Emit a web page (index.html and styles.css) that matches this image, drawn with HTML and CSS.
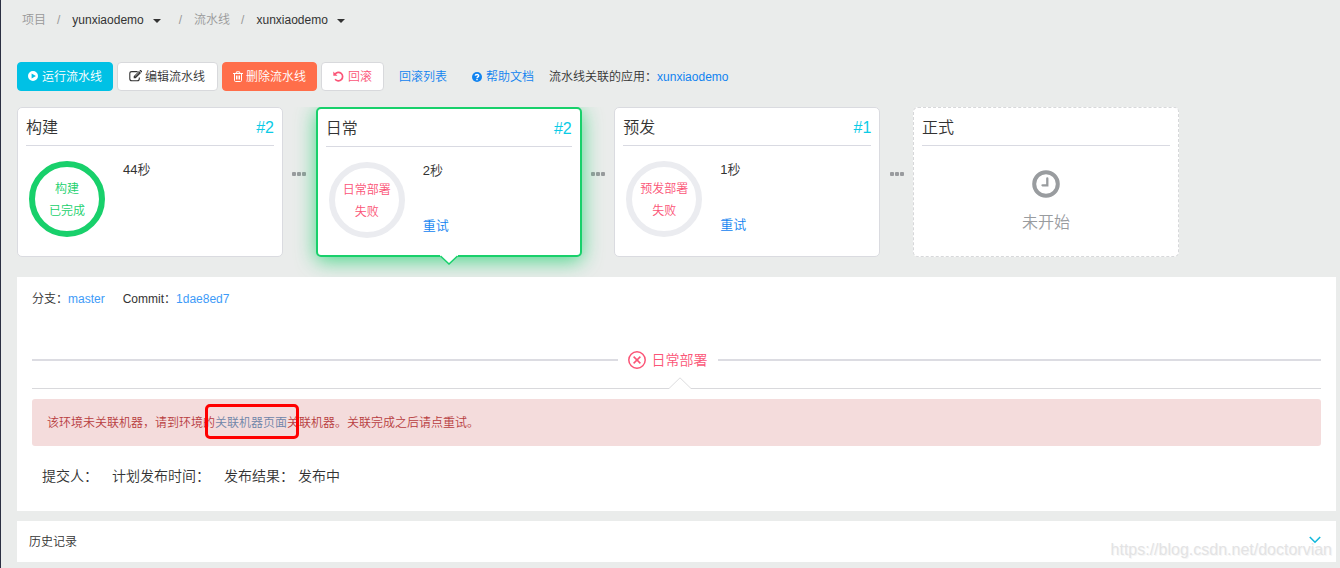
FILE: index.html
```html
<!DOCTYPE html>
<html lang="zh-CN">
<head>
<meta charset="utf-8">
<title>流水线</title>
<link rel="stylesheet" href="styles.css">
</head>
<body>
<main class="page">
  <nav class="breadcrumb" aria-label="导航">
    <span class="crumb">项目</span>
    <span class="slash">/</span>
    <button class="picker" type="button">yunxiaodemo <i class="caret"></i></button>
    <span class="slash slash-wide">/</span>
    <span class="crumb">流水线</span>
    <span class="slash">/</span>
    <button class="picker" type="button">xunxiaodemo <i class="caret"></i></button>
  </nav>

  <div class="toolbar">
    <button class="btn btn-run" type="button">
      <svg width="10" height="10" viewBox="0 0 10 10"><path fill="currentColor" fill-rule="evenodd" d="M5 0a5 5 0 1 0 0 10A5 5 0 0 0 5 0zM3.6 2.4v5.2L7.9 5z"/></svg>运行流水线</button>
    <button class="btn btn-plain btn-edit" type="button">
      <svg width="13" height="12" viewBox="0 0 13 12" fill="none" stroke="currentColor"><path stroke-width="1.1" d="M8.6 1.6H2.8C1.6 1.6.8 2.400.8 3.500v5.200c0 1.200.8 2 2 2h5.500c1.200 0 2-.8 2-2V7.500"/><path fill="currentColor" stroke="none" d="M4.700 6.300 10 1l2 2-5.300 5.300H4.700zM10.500.6l.5-.5c.3-.2.6-.2.9 0l1 1c.2.300.2.600 0 .900l-.5.500z"/><path stroke="#fff" stroke-width=".6" d="M6.200 6.200 9.900 2.500"/></svg>编辑流水线</button>
    <button class="btn btn-delete" type="button">
      <svg width="10" height="11" viewBox="0 0 10 11" fill="none" stroke="currentColor" stroke-width="1"><path d="M0 2.500h10M3 2.500l.5-1.700h3L7 2.500M1.500 2.500v7c0 .6.4 1 1 1h5c.6 0 1-.4 1-1v-7M3.500 4.500v4M5 4.500v4M6.500 4.500v4" /></svg>删除流水线</button>
    <button class="btn btn-plain btn-rollback" type="button">
      <svg width="11" height="11" viewBox="0 0 11 11"><path fill="none" stroke="currentColor" stroke-width="1.700" d="M2 3.200A4.200 4.200 0 1 1 2.100 8.200"/><path fill="currentColor" d="M.3.500v4.200h4.200z"/></svg>回滚</button>
    <a class="link rollback-list" href="#">回滚列表</a>
    <a class="link help" href="#"><svg width="10" height="10" viewBox="0 0 10 10"><circle cx="5" cy="5" r="5" fill="currentColor"/><path fill="none" stroke="#fff" stroke-width="1.400" d="M3.200 3.700C3.400 2 6.700 2 6.700 3.700 6.700 4.900 5 4.800 5 6.300"/><path fill="#fff" d="M4.300 7h1.400v1.300H4.300z"/></svg>帮助文档</a>
    <span class="related">流水线关联的应用：<a class="link" href="#">xunxiaodemo</a></span>
  </div>

  <section class="pipeline">
    <article class="stage">
      <header class="stage-head"><h2>构建</h2><a class="run-no" href="#">#2</a></header>
      <div class="stage-body">
        <div class="ring ring-done"><span>构建</span><span>已完成</span></div>
        <div class="stage-info"><span>44秒</span></div>
      </div>
    </article>
    <div class="dots"><i></i><i></i><i></i></div>
    <article class="stage stage-active">
      <header class="stage-head"><h2>日常</h2><a class="run-no" href="#">#2</a></header>
      <div class="stage-body">
        <div class="ring"><span>日常部署</span><span>失败</span></div>
        <div class="stage-info"><span>2秒</span><a class="link" href="#">重试</a></div>
      </div>
      <svg class="pointer" width="18" height="11" viewBox="0 0 18 11"><path fill="#fff" d="M0 0h18v1L9 9 0 1z"/><path fill="none" stroke="#18d06b" stroke-width="1.500" d="M.5 1 9 9l8.500-8"/></svg>
    </article>
    <div class="dots"><i></i><i></i><i></i></div>
    <article class="stage">
      <header class="stage-head"><h2>预发</h2><a class="run-no" href="#">#1</a></header>
      <div class="stage-body">
        <div class="ring"><span>预发部署</span><span>失败</span></div>
        <div class="stage-info"><span>1秒</span><a class="link" href="#">重试</a></div>
      </div>
    </article>
    <div class="dots"><i></i><i></i><i></i></div>
    <article class="stage stage-pending">
      <header class="stage-head"><h2>正式</h2></header>
      <div class="pending">
        <svg width="28" height="28" viewBox="0 0 28 28" fill="none" stroke="currentColor"><circle cx="14" cy="14" r="11.800" stroke-width="4"/><path stroke-width="2.300" stroke-linecap="round" d="M15.300 8.500v6.800H10.500"/></svg>
        <span>未开始</span>
      </div>
    </article>
  </section>

  <section class="panel detail">
    <div class="commit">
      <span>分支：<a class="link-soft" href="#">master</a></span>
      <span>Commit：<a class="link-soft" href="#">1dae8ed7</a></span>
    </div>
    <div class="step">
      <h3 class="step-title">
        <svg width="18" height="18" viewBox="0 0 18 18" fill="none" stroke="currentColor" stroke-width="1.500"><circle cx="9" cy="9" r="8.200"/><path d="m5.600 5.600 6.800 6.800m0-6.800-6.800 6.800"/></svg>日常部署</h3>
    </div>
    <div class="divider">
      <svg width="22" height="12" viewBox="0 0 22 12"><path fill="#fff" d="M0 12V11L11 0l11 11v1z"/><path fill="none" stroke="#dcdcde" d="M0 11.500 11 .8l11 10.700"/></svg>
    </div>
    <div class="alert" role="alert">该环境未关联机器，请到环境的<a class="machine-link" href="#">关联机器页面</a>关联机器。关联完成之后请点重试。</div>
    <div class="facts">
      <span>提交人：</span>
      <span>计划发布时间：</span>
      <span>发布结果： 发布中</span>
    </div>
  </section>

  <button class="panel history" type="button">
    <span>历史记录</span>
    <svg width="12" height="8" viewBox="0 0 12 8" fill="none" stroke="#14b9dc" stroke-width="1.600"><path d="m.8 1 5.200 5.200L11.200 1"/></svg>
  </button>
  <div class="watermark">https://blog.csdn.net/doctorvian</div>
</main>
</body>
</html>
```

FILE: styles.css
```css
* { box-sizing: border-box; }

body {
  margin: 0;
  background: #eaeceb;
  color: #333;
  font: 350 12px/18px "Liberation Sans", "Noto Sans CJK SC", sans-serif;
}

svg { display: block; flex: none; }

button { font: inherit; color: inherit; cursor: pointer; }

a { text-decoration: none; }

.link { color: #1083f0; }
.link-soft { color: #3d9bf8; }

.page {
  position: relative;
  min-height: 100vh;
  padding: 0 4px 6px 16px;
  border-left: 1px solid #2b2f42;
}

.breadcrumb {
  display: flex;
  align-items: center;
  height: 40px;
  padding-left: 5px;
}

.crumb, .slash { color: #999; }
.slash { padding: 0 12px 0 11px; }
.slash-wide { padding-left: 18px; }

.picker {
  display: flex;
  align-items: center;
  gap: 9px;
  padding: 0;
  border: 0;
  background: none;
}

.caret {
  margin-top: 2px;
  border: 4px solid transparent;
  border-top-color: #333;
  border-bottom: 0;
}

.toolbar {
  display: flex;
  align-items: center;
  gap: 4px;
  margin-top: 22px;
}

.btn {
  display: flex;
  align-items: center;
  gap: 4px;
  height: 29px;
  padding: 0 10px;
  border: 1px solid transparent;
  border-radius: 4px;
}

.btn svg { margin-bottom: 1px; }

.btn-run { background: #00c1e5; border-color: #00c1e5; color: #fff; }
.btn-plain { padding: 0 11px; background: #fff; border-color: #d8d9dc; }
.btn-edit { gap: 3px; padding-right: 12px; }
.btn-delete { gap: 3px; background: #ff6e4a; border-color: #ff6e4a; color: #fff; }
.btn-rollback { color: #fb5577; }

.rollback-list { margin-left: 11px; }
.help { display: flex; align-items: center; gap: 4px; margin-left: 21px; }
.related { margin-left: 11px; }

.pipeline {
  display: flex;
  max-width: 1162px;
  padding: 0 0 20px;
  margin-top: 16px;
  overflow: hidden;
}

.stage {
  position: relative;
  flex: none;
  width: 266px;
  height: 150px;
  padding: 0 8px;
  background: #fff;
  border: 1px solid #dadbe0;
  border-radius: 5px;
}

.stage-active {
  border: 2px solid #18d06b;
  box-shadow: 0 4px 20px rgba(24, 208, 107, 0.75);
}

.stage-pending { border: 1px dashed #d7d8da; }

.stage-head {
  display: flex;
  align-items: center;
  justify-content: space-between;
  height: 38px;
  padding-top: 2px;
  border-bottom: 1px solid #d9dae2;
  font-size: 16px;
  line-height: 24px;
}

.stage-head h2 { margin: 0; font-size: 16px; font-weight: inherit; }
.run-no { color: #0bcbe6; }

.stage-body { display: flex; gap: 18px; padding: 15px 3px; }

.ring {
  display: flex;
  flex-direction: column;
  align-items: center;
  justify-content: center;
  width: 76px;
  height: 76px;
  padding-top: 2px;
  border: 6px solid #ebecf0;
  border-radius: 50%;
  color: #fb5577;
  line-height: 22px;
}

.ring-done { border-color: #18d06b; color: #18d06b; }

.stage-info {
  display: flex;
  flex-direction: column;
  justify-content: space-between;
  height: 73px;
  font-size: 13px;
}

.pointer { position: absolute; top: 100%; left: 50%; margin: 0 0 0 -9px; }

.dots {
  display: flex;
  flex: 1;
  justify-content: center;
  gap: 1px;
  padding-top: 65px;
}

.dots i { width: 4px; height: 4px; background: #999b9e; border-radius: 1px; }

.pending {
  display: flex;
  flex-direction: column;
  align-items: center;
  gap: 13px;
  padding-top: 24px;
  color: #999c9f;
  font-size: 16px;
  line-height: 24px;
}

.panel { display: block; background: #fff; }
.detail { padding: 13px 15px 24px; }
.commit { display: flex; gap: 18px; }

.step {
  display: flex;
  align-items: center;
  margin-top: 40px;
}

.step::before, .step::after {
  content: "";
  flex: 1;
  height: 2px;
  background: #dcdce2;
}

.step::after { flex-basis: 18px; }

.step-title {
  display: flex;
  align-items: center;
  gap: 6px;
  margin: 0;
  padding: 0 10px;
  color: #fb5577;
  font-size: 14px;
  font-weight: inherit;
  line-height: 24px;
}

.divider {
  display: flex;
  align-items: flex-end;
  justify-content: center;
  height: 17px;
  background: linear-gradient(#d9d9dc, #d9d9dc) bottom / 100% 1px no-repeat;
}

.divider svg { margin-left: 6px; }

.alert {
  margin-top: 10px;
  padding: 15px 15px 14px;
  background: #f4dcdc;
  border-radius: 3px;
  color: #b83d3f;
}

.machine-link { position: relative; color: #6f84a8; }

.machine-link::after {
  content: "";
  position: absolute;
  inset: -12px -12px -9px -10px;
  border: 3px solid #f00;
  border-radius: 5px;
}

.facts {
  display: flex;
  gap: 14px;
  margin-top: 19px;
  padding: 0 10px;
  font-size: 14px;
  line-height: 22px;
}

.history {
  display: flex;
  align-items: center;
  justify-content: space-between;
  width: 100%;
  height: 41px;
  margin-top: 10px;
  padding: 0 15px 0 12px;
  border: 0;
}

.history svg { margin-bottom: 4px; }

.watermark {
  position: absolute;
  right: 8px;
  bottom: 8px;
  color: #e3e3e4;
  font-size: 16px;
  line-height: 20px;
  text-shadow: 1px 1px 0 #f6f6f6;
}
```
